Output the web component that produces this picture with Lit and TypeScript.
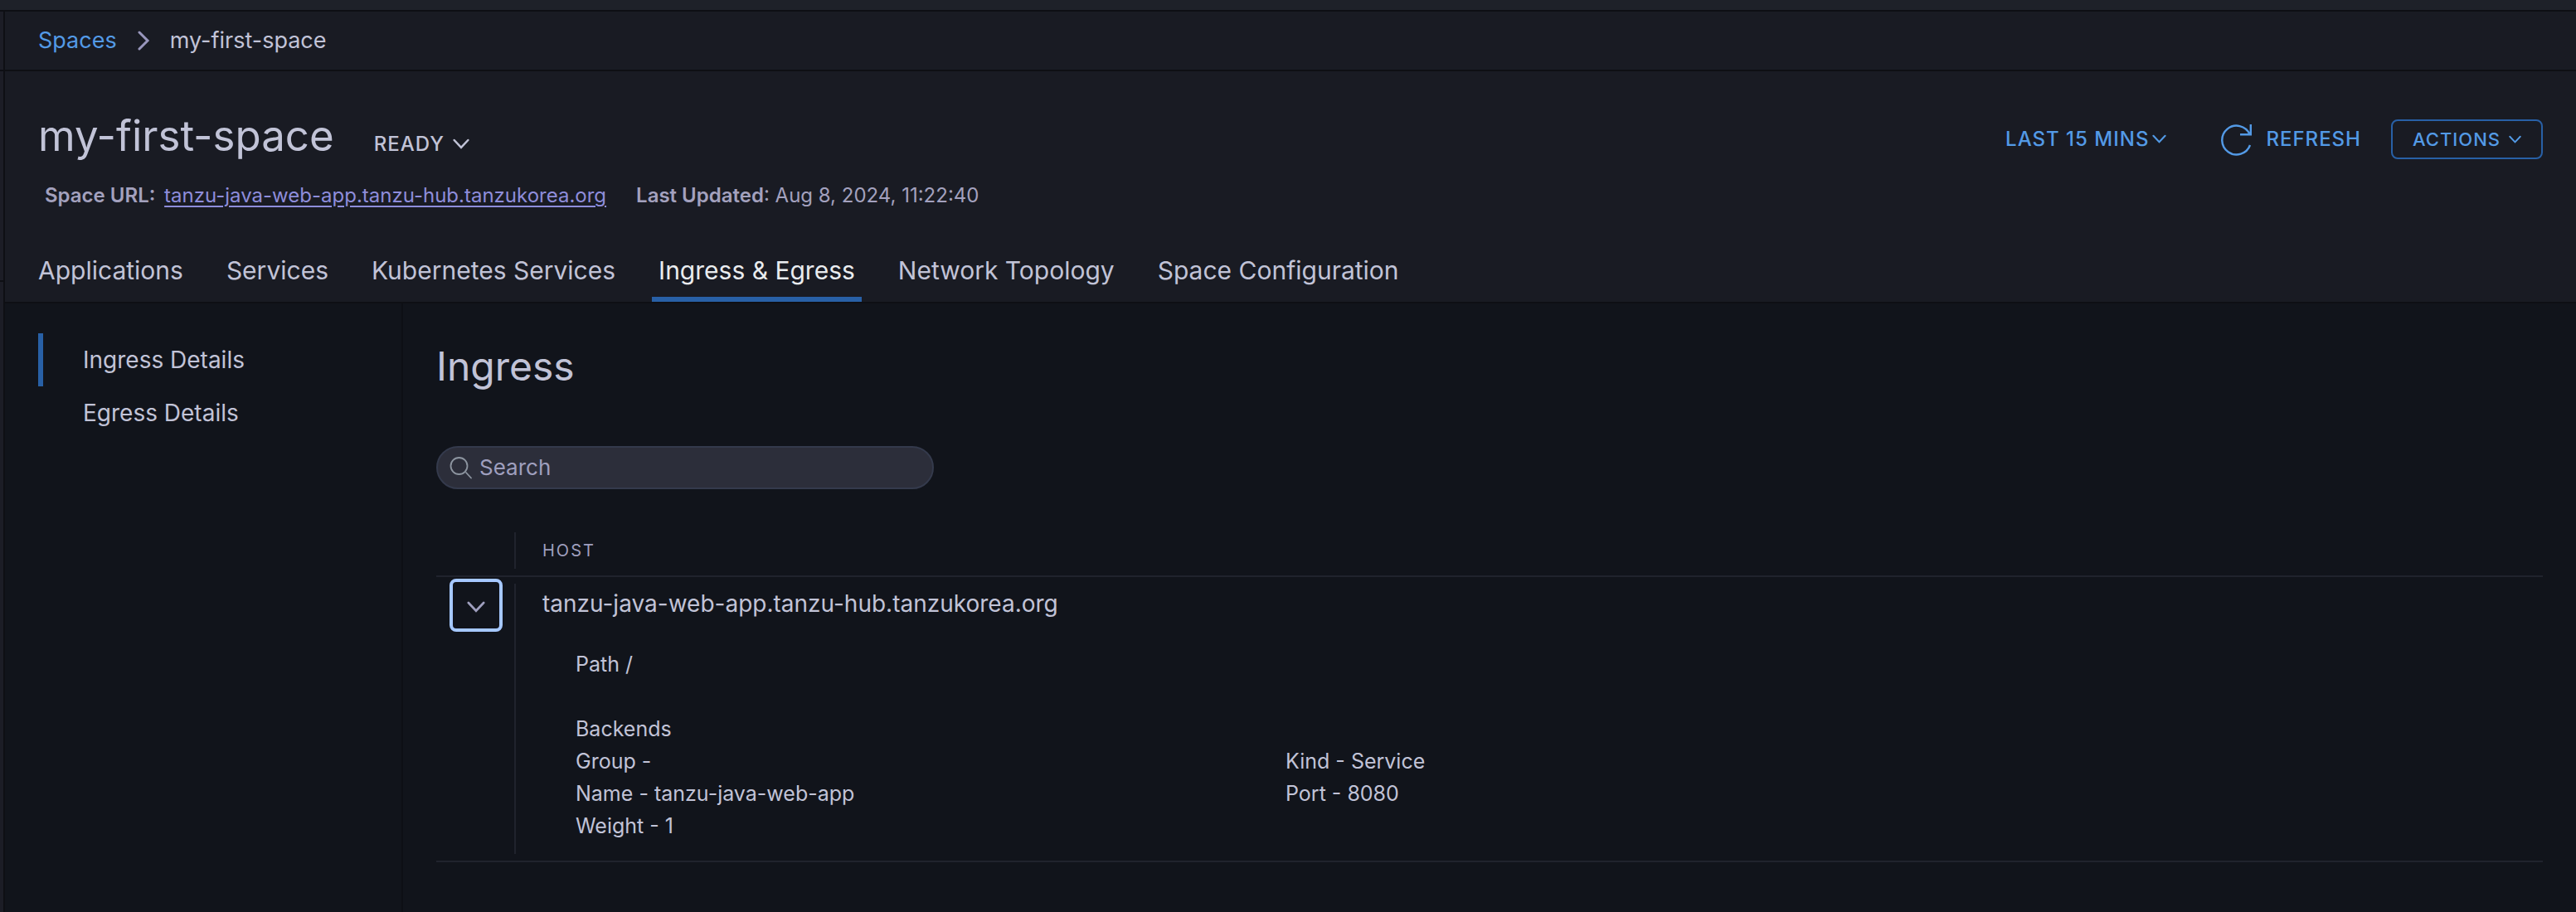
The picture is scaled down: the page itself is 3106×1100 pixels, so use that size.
import { LitElement, html, css, svg } from "lit";
import { customElement, state } from "lit/decorators.js";

interface Backend {
  group: string;
  kind: string;
  name: string;
  port: number;
  weight: number;
}

interface IngressRow {
  host: string;
  path: string;
  backends: Backend[];
}

const TABS = [
  "Applications",
  "Services",
  "Kubernetes Services",
  "Ingress & Egress",
  "Network Topology",
  "Space Configuration",
];

const SECTIONS = ["Ingress Details", "Egress Details"];

const ROWS: IngressRow[] = [
  {
    host: "tanzu-java-web-app.tanzu-hub.tanzukorea.org",
    path: "/",
    backends: [{ group: "", kind: "Service", name: "tanzu-java-web-app", port: 8080, weight: 1 }],
  },
];

const caret = (width: number, height: number) => html`
  <svg class="caret" width=${width} height=${height} viewBox="0 0 18 12" aria-hidden="true">
    ${svg`<path d="M1.5 1.5 9 9.5 16.5 1.5" fill="none" stroke="currentColor" stroke-width="2.2" stroke-linecap="round" />`}
  </svg>
`;

@customElement("app-root")
export class AppRoot extends LitElement {
  @state() private tab = "Ingress & Egress";
  @state() private section = "Ingress Details";
  @state() private query = "";
  @state() private open = true;

  static styles = css`
    :host {
      display: block;
      color: #c1c3d7;
      background: #11141b;
      font-family: Inter, "Noto Sans", sans-serif;
      font-size: 28px;
      line-height: 40px;
    }
    * {
      box-sizing: border-box;
    }
    button,
    input {
      margin: 0;
      padding: 0;
      border: 0;
      background: none;
      color: inherit;
      font: inherit;
    }
    button {
      cursor: pointer;
    }
    h1,
    h2,
    p {
      margin: 0;
      font-weight: 400;
    }
    .shell {
      display: grid;
      grid-template: 14px 1fr / 6px 1fr;
      min-height: 100vh;
    }
    .topbar {
      grid-column: 1 / 3;
      background: #1e2129;
      border-bottom: 2px solid #0e0f14;
    }
    .rail {
      display: flex;
      flex-direction: column;
      background: #1c1d26;
      border-right: 2px solid #0e0f14;
    }
    .rail-part {
      height: 72px;
      border-bottom: 2px solid #0e0f14;
    }
    .rail-part.tall {
      height: 254px;
    }
    .page {
      display: flex;
      flex-direction: column;
      min-width: 0;
    }
    .crumbs {
      display: flex;
      align-items: center;
      gap: 24px;
      height: 72px;
      padding: 0 40px;
      background: #191b23;
      border-bottom: 2px solid #0e0f14;
      font-size: 27px;
    }
    .crumbs a {
      color: #539ae6;
      text-decoration: none;
    }
    .crumbs svg {
      color: #9997bd;
    }
    .header {
      padding: 46px 40px 0;
      background: #191b23;
      border-bottom: 2px solid #0e0f14;
    }
    .title-row,
    .title,
    .actions,
    .meta,
    .tabs {
      display: flex;
    }
    .title-row {
      justify-content: space-between;
      align-items: flex-start;
    }
    .title {
      align-items: baseline;
      gap: 48px;
    }
    .title h1 {
      font-size: 51px;
      line-height: 64px;
    }
    .caps {
      display: flex;
      align-items: center;
      gap: 10px;
      font-size: 24px;
      font-weight: 500;
      letter-spacing: 1px;
      line-height: 32px;
    }
    .actions {
      align-items: center;
      gap: 36px;
      padding-top: 12px;
      color: #539ae6;
    }
    .actions .range {
      gap: 4px;
      margin-right: 30px;
    }
    .actions .refresh {
      gap: 16px;
    }
    .actions .outlined {
      height: 48px;
      padding: 0 24px;
      border: 2px solid #2860a6;
      border-radius: 8px;
      font-size: 22px;
    }
    .meta {
      gap: 36px;
      padding: 24px 8px 0;
      color: #a3a1be;
      font-size: 24px;
      line-height: 32px;
    }
    .meta b {
      font-weight: 600;
    }
    .meta a {
      margin-left: 4px;
      color: #8e8ddb;
      text-underline-offset: 4px;
    }
    .tabs {
      gap: 36px;
      margin: 42px -8px 0;
      height: 70px;
    }
    .tab {
      padding: 0 8px;
      font-size: 30px;
      border-bottom: 6px solid transparent;
      white-space: nowrap;
    }
    .tab.active {
      color: #e9ecef;
      border-bottom-color: #2860a6;
    }
    .body {
      display: flex;
      flex: 1;
    }
    .side {
      flex: none;
      width: 480px;
      padding: 36px 40px;
      border-right: 2px solid #0d0f15;
    }
    .side button {
      display: block;
      width: 100%;
      height: 64px;
      padding-left: 48px;
      border-left: 6px solid transparent;
      text-align: left;
    }
    .side button.active {
      border-left-color: #2860a6;
    }
    .content {
      flex: 1;
      min-width: 0;
      padding: 40px 40px 0;
    }
    .content h2 {
      font-size: 48px;
      line-height: 72px;
    }
    .search {
      display: flex;
      align-items: center;
      gap: 8px;
      width: 600px;
      max-width: 100%;
      height: 52px;
      margin-top: 60px;
      padding: 0 14px;
      border: 2px solid #343a4c;
      border-radius: 26px;
      background: #2c2e3a;
    }
    .search input {
      flex: 1;
      min-width: 0;
      outline: 0;
      font-size: 26px;
    }
    .search input::placeholder {
      color: #9f9fbe;
      opacity: 1;
    }
    .grid {
      width: 100%;
      margin-top: 44px;
      border-collapse: collapse;
      text-align: left;
    }
    .grid tr {
      border-bottom: 2px solid #20232d;
    }
    .grid th,
    .grid td {
      padding: 8px 0;
      font-weight: 400;
      vertical-align: top;
    }
    .grid .toggle-cell {
      width: 94px;
      padding: 2px 14px 2px 16px;
    }
    .cell {
      padding-left: 32px;
      border-left: 2px solid #20232d;
    }
    .grid th .cell {
      height: 44px;
      color: #9f9fbe;
      font-size: 20px;
      letter-spacing: 2px;
      line-height: 44px;
    }
    .toggle {
      display: flex;
      align-items: center;
      justify-content: center;
      width: 64px;
      height: 64px;
      padding-top: 4px;
      border: 4px solid #a6c8ff;
      border-radius: 8px;
      color: #9f9fbe;
    }
    .grid td .cell {
      min-height: 326px;
      padding-top: 4px;
    }
    .detail {
      padding: 34px 40px 0;
      font-size: 25px;
      line-height: 39px;
    }
    .backends {
      display: grid;
      grid-template-columns: 856px 1fr;
      padding-top: 39px;
    }
    .wide {
      grid-column: 1 / 3;
    }
  `;

  private renderBackend(b: Backend) {
    return html`
      <div class="backends">
        <p class="wide">Backends</p>
        <p>Group - ${b.group}</p>
        <p>Kind - ${b.kind}</p>
        <p>Name - ${b.name}</p>
        <p>Port - ${b.port}</p>
        <p>Weight - ${b.weight}</p>
      </div>
    `;
  }

  private renderRow(row: IngressRow) {
    return html`
      <tr>
        <td class="toggle-cell">
          <button
            class="toggle"
            aria-label="Toggle details"
            aria-expanded=${this.open}
            @click=${() => (this.open = !this.open)}
          >
            ${caret(22, 15)}
          </button>
        </td>
        <td>
          <div class="cell">
            <p>${row.host}</p>
            ${this.open
              ? html`<div class="detail">
                  <p>Path ${row.path}</p>
                  ${row.backends.map((b) => this.renderBackend(b))}
                </div>`
              : null}
          </div>
        </td>
      </tr>
    `;
  }

  render() {
    const rows = ROWS.filter((r) => r.host.includes(this.query));
    return html`
      <div class="shell">
        <div class="topbar"></div>
        <div class="rail">
          <div class="rail-part"></div>
          <div class="rail-part tall"></div>
        </div>
        <div class="page">
          <nav class="crumbs" aria-label="Breadcrumb">
            <a href="#spaces">Spaces</a>
            <svg width="16" height="24" viewBox="0 0 16 24" aria-hidden="true">
              <path d="M3 2 13 12 3 22" fill="none" stroke="currentColor" stroke-width="3" stroke-linecap="round" />
            </svg>
            <span>my-first-space</span>
          </nav>
          <header class="header">
            <div class="title-row">
              <div class="title">
                <h1>my-first-space</h1>
                <button class="caps">READY ${caret(20, 14)}</button>
              </div>
              <div class="actions">
                <button class="caps range">LAST 15 MINS${caret(17, 12)}</button>
                <button class="caps refresh">
                  <svg width="38" height="40" viewBox="0 0 38 40" aria-hidden="true">
                    <path
                      d="M35 27A17.400 17.400 0 1 1 34.500 13.800M35.800 2V14.200H23"
                      fill="none"
                      stroke="currentColor"
                      stroke-width="2.400"
                    />
                  </svg>
                  REFRESH
                </button>
                <button class="caps outlined">ACTIONS ${caret(15, 11)}</button>
              </div>
            </div>
            <div class="meta">
              <p><b>Space URL:</b> <a href="#url">tanzu-java-web-app.tanzu-hub.tanzukorea.org</a></p>
              <p><b>Last Updated</b>: Aug 8, 2024, 11:22:40</p>
            </div>
            <nav class="tabs" role="tablist">
              ${TABS.map(
                (t) => html`<button
                  class="tab ${t === this.tab ? "active" : ""}"
                  role="tab"
                  aria-selected=${t === this.tab}
                  @click=${() => (this.tab = t)}
                >
                  ${t}
                </button>`
              )}
            </nav>
          </header>
          <div class="body">
            <nav class="side">
              ${SECTIONS.map(
                (s) => html`<button
                  class=${s === this.section ? "active" : ""}
                  @click=${() => (this.section = s)}
                >
                  ${s}
                </button>`
              )}
            </nav>
            <main class="content">
              <h2>Ingress</h2>
              <label class="search">
                <svg width="28" height="28" viewBox="0 0 28 28" aria-hidden="true">
                  <circle cx="11.500" cy="12" r="10" fill="none" stroke="#8d95a0" stroke-width="1.800" />
                  <path d="M20 20 26 26.500" fill="none" stroke="#8d95a0" stroke-width="1.800" stroke-linecap="round" />
                </svg>
                <input
                  type="search"
                  aria-label="Search"
                  placeholder="Search"
                  .value=${this.query}
                  @input=${(e: Event) => (this.query = (e.target as HTMLInputElement).value)}
                />
              </label>
              <table class="grid">
                <thead>
                  <tr>
                    <th class="toggle-cell"></th>
                    <th scope="col"><div class="cell">HOST</div></th>
                  </tr>
                </thead>
                <tbody>
                  ${rows.map((r) => this.renderRow(r))}
                </tbody>
              </table>
            </main>
          </div>
        </div>
      </div>
    `;
  }
}
